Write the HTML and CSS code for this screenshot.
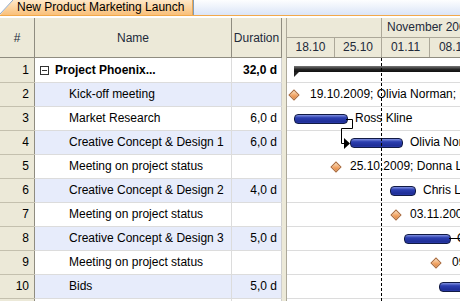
FILE: index.html
```html
<!DOCTYPE html>
<html lang="en">
<head>
    <meta charset="UTF-8">
    <title>New Product Marketing Launch</title>
    <link rel="stylesheet" href="styles.css">
</head>
<body>

<div class="tabbar">
    <svg class="tab-corner" width="13" height="15" viewBox="0 0 13 15">
        <defs>
            <linearGradient id="tabfill" x1="0" y1="0" x2="0" y2="1">
                <stop offset="0" stop-color="#fee8c8"/>
                <stop offset="1" stop-color="#f9c07a"/>
            </linearGradient>
        </defs>
        <polygon points="0,15 13,0 13,15" fill="url(#tabfill)"/>
        <line x1="0" y1="14" x2="13" y2="0" stroke="#8fa8c8" stroke-width="1"/>
    </svg>
    <div class="tab">New Product Marketing Launch</div>
    <div class="tab-rest"></div>
</div>

<div class="main">
    <div class="table">
        <div class="thead">
            <div class="num">#</div>
            <div class="name">Name</div>
            <div class="dur">Duration</div>
        </div>
        <div class="trow summary">
            <div class="num">1</div>
            <div class="name"><span class="toggle"></span>Project Phoenix...</div>
            <div class="dur">32,0 d</div>
        </div>
        <div class="trow alt">
            <div class="num">2</div>
            <div class="name sub">Kick-off meeting</div>
            <div class="dur"></div>
        </div>
        <div class="trow">
            <div class="num">3</div>
            <div class="name sub">Market Research</div>
            <div class="dur">6,0 d</div>
        </div>
        <div class="trow alt">
            <div class="num">4</div>
            <div class="name sub">Creative Concept &amp; Design 1</div>
            <div class="dur">6,0 d</div>
        </div>
        <div class="trow">
            <div class="num">5</div>
            <div class="name sub">Meeting on project status</div>
            <div class="dur"></div>
        </div>
        <div class="trow alt">
            <div class="num">6</div>
            <div class="name sub">Creative Concept &amp; Design 2</div>
            <div class="dur">4,0 d</div>
        </div>
        <div class="trow">
            <div class="num">7</div>
            <div class="name sub">Meeting on project status</div>
            <div class="dur"></div>
        </div>
        <div class="trow alt">
            <div class="num">8</div>
            <div class="name sub">Creative Concept &amp; Design 3</div>
            <div class="dur">5,0 d</div>
        </div>
        <div class="trow">
            <div class="num">9</div>
            <div class="name sub">Meeting on project status</div>
            <div class="dur"></div>
        </div>
        <div class="trow alt">
            <div class="num">10</div>
            <div class="name sub">Bids</div>
            <div class="dur">5,0 d</div>
        </div>
        <div class="trow">
            <div class="num"></div>
            <div class="name sub"></div>
            <div class="dur"></div>
        </div>
    </div>

    <div class="splitter"></div>

    <div class="gantt">
        <div class="ghead">
            <div class="months">
                <div class="month blank"></div>
                <div class="month">November 2009</div>
            </div>
            <div class="weeks">
                <div class="week w48">18.10</div>
                <div class="week w47">25.10</div>
                <div class="week w48">01.11</div>
                <div class="week w48">08.11</div>
            </div>
        </div>
        <div class="gbody">
            <div class="grow">
                <div class="sumbar" style="left: 7px;"></div>
            </div>
            <div class="grow">
                <div class="milestone" style="left: 3px;"></div>
                <div class="label" style="left: 23px;">19.10.2009; Olivia Norman; Ross Kline</div>
            </div>
            <div class="grow">
                <div class="bar" style="left: 7px; width: 52px;"></div>
                <div class="label" style="left: 68px;">Ross Kline</div>
            </div>
            <div class="grow">
                <div class="bar" style="left: 63px; width: 51px;"></div>
                <div class="label" style="left: 123px;">Olivia Norman</div>
            </div>
            <div class="grow">
                <div class="milestone" style="left: 45px;"></div>
                <div class="label" style="left: 63px;">25.10.2009; Donna Lee</div>
            </div>
            <div class="grow">
                <div class="bar" style="left: 103px; width: 24px;"></div>
                <div class="label" style="left: 136px;">Chris Lee</div>
            </div>
            <div class="grow">
                <div class="milestone" style="left: 105px;"></div>
                <div class="label" style="left: 123px;">03.11.2009; Donna Lee</div>
            </div>
            <div class="grow">
                <div class="bar" style="left: 117px; width: 45px;"></div>
                <div class="label" style="left: 170px;">Olivia Norman</div>
            </div>
            <div class="grow">
                <div class="milestone" style="left: 145px;"></div>
                <div class="label" style="left: 165px;">09.11.2009; Donna Lee</div>
            </div>
            <div class="grow">
                <div class="bar" style="left: 152px; width: 60px;"></div>
            </div>
            <div class="grow"></div>

            <div class="today"></div>

            <!-- dependency links -->
            <svg class="links" width="173" height="243" viewBox="0 0 173 243">
                <path d="M59 61.5 H65.5 V70.5 H54.5 V85.5 H58" fill="none" stroke="#000" stroke-width="1"/>
                <polygon points="57,80 63,85.5 57,91" fill="#000"/>
                <path d="M162 180.5 H173" fill="none" stroke="#000" stroke-width="1"/>
            </svg>
        </div>
    </div>
</div>

</body>
</html>
```

FILE: styles.css
```css
body {
    margin: 0;
    width: 460px;
    height: 301px;
    overflow: hidden;
    background-color: #fff;
    font-family: "Liberation Sans", Arial, sans-serif;
    font-size: 12px;
    color: #000;
}

/* document tab */
.tabbar {
    display: flex;
    height: 15px;
    border-bottom: 1px solid #f2a94a;
}

.tab-corner {
    display: block;
    flex: none;
}

.tab {
    flex: none;
    padding: 0 8px 0 4px;
    line-height: 15px;
    background: linear-gradient(#fee8c8, #f9c07a);
    border-right: 1px solid #e8a656;
    white-space: nowrap;
}

.tab-rest {
    flex: 1;
    background: linear-gradient(#fdfeff, #dbe5f7);
    border-left: 1px solid #7f9db9;
}

.main {
    display: flex;
    margin-top: 2px;
    height: 283px;
    overflow: hidden;
}

/* task table */
.table {
    width: 282px;
    flex: none;
}

.thead,
.trow {
    display: flex;
}

.thead {
    height: 39px;
    background-color: #ece9d8;
    border-bottom: 1px solid #8f8c80;
    color: #222a3a;
}

.thead > div {
    display: flex;
    align-items: center;
    justify-content: center;
    border-right: 1px solid #8f8c80;
}

.num {
    width: 34px;
    flex: none;
}

.name {
    width: 196px;
    flex: none;
}

.dur {
    width: 49px;
    flex: none;
}

.trow {
    height: 23px;
    line-height: 23px;
    border-bottom: 1px solid #dcdcdc;
}

.trow:nth-child(2) {
    height: 24px;
    line-height: 24px;
}

.trow.alt {
    background-color: #e7ecfb;
}

.trow .num {
    background-color: #ece9d8;
    border-right: 1px solid #8f8c80;
    box-shadow: 0 1px 0 #c4c0ae;
    text-align: right;
    padding-right: 5px;
    width: 29px;
    font-weight: normal;
}

.trow .name {
    border-right: 1px solid #dcdcdc;
    padding-left: 5px;
    width: 191px;
    white-space: nowrap;
    overflow: hidden;
}

.trow .name.sub {
    padding-left: 34px;
    width: 162px;
}

.trow .dur {
    border-right: 1px solid #cfcfcf;
    text-align: right;
    padding-right: 4px;
    width: 45px;
}

.summary .name,
.summary .dur {
    font-weight: bold;
}

.toggle {
    display: inline-block;
    width: 7px;
    height: 7px;
    border: 1px solid #333;
    background: linear-gradient(#333, #333) center / 5px 1px no-repeat, #fff;
    margin-right: 6px;
    vertical-align: -1px;
}

.splitter {
    width: 4px;
    flex: none;
    background-color: #ece9d8;
    border-right: 1px solid #aca899;
}

/* gantt chart */
.gantt {
    flex: 1;
    overflow: hidden;
}

.ghead {
    background-color: #ece9d8;
    color: #222a3a;
    border-bottom: 1px solid #8f8c80;
}

.months,
.weeks {
    display: flex;
    height: 19px;
    line-height: 19px;
    white-space: nowrap;
}

.months {
    border-bottom: 1px solid #aca899;
}

.month {
    flex: none;
    padding-left: 5px;
}

.month.blank {
    width: 94px;
    padding-left: 0;
    border-right: 1px solid #aca899;
}

.week {
    flex: none;
    text-align: center;
    border-right: 1px solid #aca899;
}

.w48 {
    width: 47px;
}

.w47 {
    width: 46px;
}

.gbody {
    position: relative;
    padding-top: 1px;
}

.grow {
    position: relative;
    height: 23px;
    border-bottom: 1px solid #dcdcdc;
    white-space: nowrap;
}

.sumbar {
    position: absolute;
    top: 7px;
    right: -10px;
    height: 6px;
    background: linear-gradient(#777, #222 60%, #111);
}

.sumbar::before {
    content: "";
    position: absolute;
    left: 0;
    top: 6px;
    border-left: 5px solid #222;
    border-bottom: 5px solid transparent;
}

.bar {
    position: absolute;
    top: 7px;
    height: 8px;
    border: 1px solid #111a44;
    border-radius: 4px;
    background: linear-gradient(#8090e0, #2c3fb0 35%, #1f2f98 80%, #2a3aa8);
}

.milestone {
    position: absolute;
    top: 8px;
    width: 6px;
    height: 6px;
    transform: rotate(45deg);
    border: 1px solid #a8683a;
    background: linear-gradient(135deg, #fde0bc, #f0a060 60%, #e08840);
}

.label {
    position: absolute;
    top: 0;
    line-height: 23px;
}

.today {
    position: absolute;
    left: 94px;
    top: 0;
    bottom: 0;
    width: 1px;
    background: repeating-linear-gradient(#000 0 3px, transparent 3px 5px);
}

.links {
    position: absolute;
    left: 0;
    top: 0;
}
```
